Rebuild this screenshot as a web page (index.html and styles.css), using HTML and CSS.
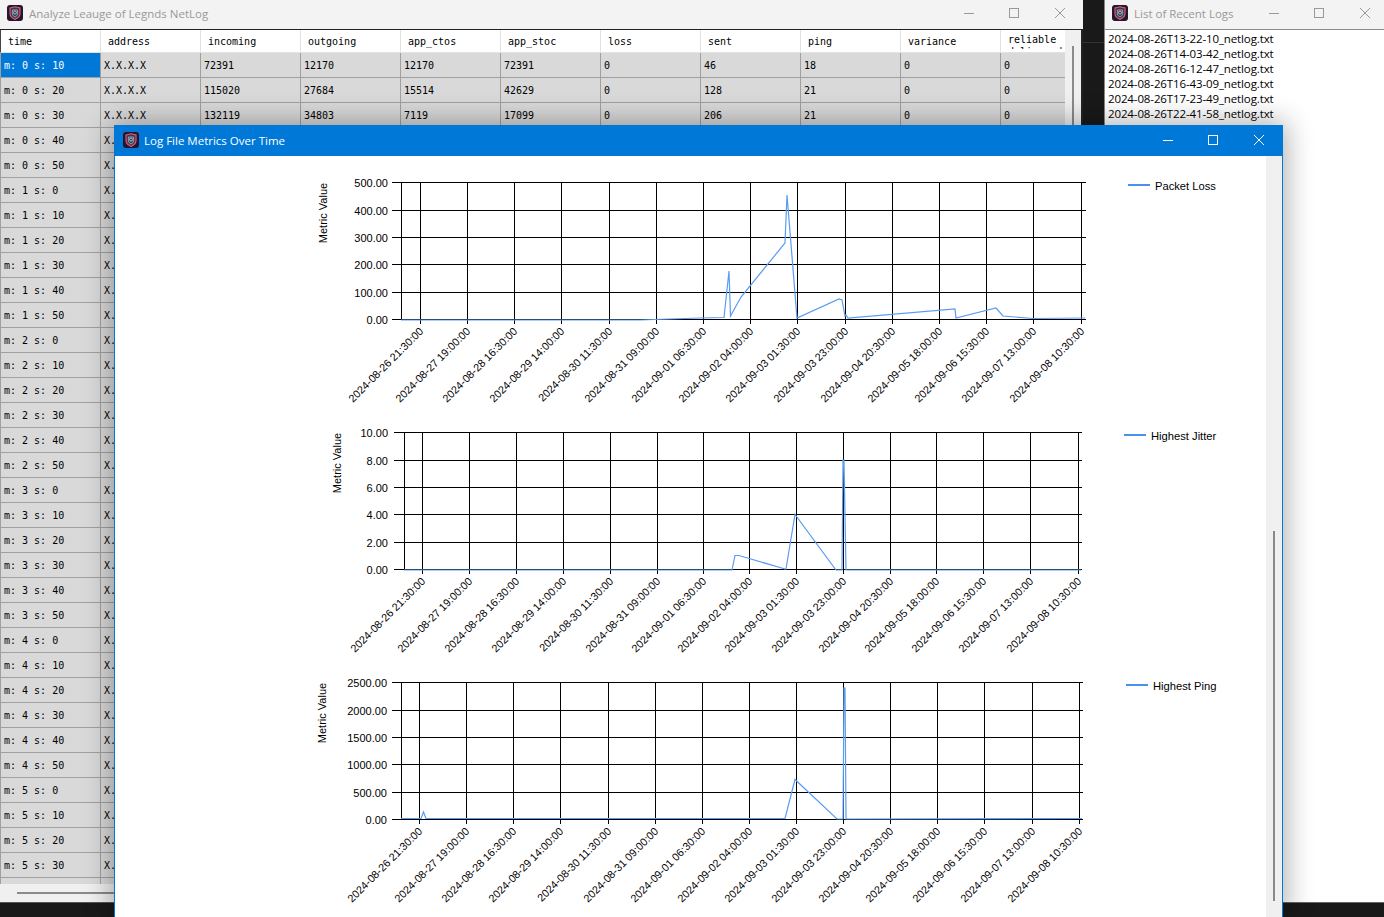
FILE: index.html
```html
<!DOCTYPE html>
<html lang="en">
<head>
    <meta charset="UTF-8">
    <meta name="viewport" content="width=device-width, initial-scale=1.0">
    <title>Analyze Leauge of Legnds NetLog</title>
    <link rel="stylesheet" href="styles.css">
</head>
<body>
    <svg class="defs" width="0" height="0" aria-hidden="true">
        <symbol id="app-icon" viewBox="0 0 16 16">
            <rect x="0" y="0" width="16" height="16" rx="3" fill="#221630"/>
            <path d="M3 3 L8 1.8 L13 3 V8.5 C13 11.5 10.5 13.3 8 14.4 C5.500 13.3 3 11.500 3 8.500 Z" fill="#5a2a48" stroke="#e0607a" stroke-width="1.100"/>
            <path d="M5.400 5 H10.600 V8.800 C10.600 10.400 9.300 11.300 8 12 C6.700 11.300 5.400 10.400 5.400 8.800 Z" fill="#33405a" stroke="#6fc2c0" stroke-width="0.900"/>
            <circle cx="8" cy="7.600" r="1.500" fill="none" stroke="#e8c8d0" stroke-width="0.800"/>
        </symbol>
        <symbol id="win-min" viewBox="0 0 10 10"><path d="M0 5.500 H10" fill="none" stroke="currentColor"/></symbol>
        <symbol id="win-max" viewBox="0 0 10 10"><rect x="0.500" y="0.500" width="9" height="9" fill="none" stroke="currentColor"/></symbol>
        <symbol id="win-close" viewBox="0 0 10 10"><path d="M0 0 L10 10 M10 0 L0 10" fill="none" stroke="currentColor"/></symbol>
    </svg>

    <div class="desktop">
        <div class="desktop-line"></div>

        <!-- main window with the table -->
        <section class="window main-window">
            <header class="titlebar">
                <svg class="app-icon"><use href="#app-icon"/></svg>
                <span class="title">Analyze Leauge of Legnds NetLog</span>
                <div class="controls">
                    <svg class="ctl"><use href="#win-min"/></svg>
                    <svg class="ctl"><use href="#win-max"/></svg>
                    <svg class="ctl ctl-close"><use href="#win-close"/></svg>
                </div>
            </header>
            <div class="table-area">
                <div class="table-clip">
                    <table class="log-table">
                        <thead id="logHead"></thead>
                        <tbody id="logBody"></tbody>
                    </table>
                </div>
                <div class="vscroll"><div class="vthumb"></div></div>
            </div>
            <div class="hscroll"><div class="hthumb"></div></div>
        </section>

        <!-- list of logs -->
        <section class="window list-window">
            <header class="titlebar">
                <svg class="app-icon"><use href="#app-icon"/></svg>
                <span class="title">List of Recent Logs</span>
                <div class="controls">
                    <svg class="ctl"><use href="#win-min"/></svg>
                    <svg class="ctl"><use href="#win-max"/></svg>
                    <svg class="ctl ctl-close"><use href="#win-close"/></svg>
                </div>
            </header>
            <ul class="log-list">
                <li>2024-08-26T13-22-10_netlog.txt</li>
                <li>2024-08-26T14-03-42_netlog.txt</li>
                <li>2024-08-26T16-12-47_netlog.txt</li>
                <li>2024-08-26T16-43-09_netlog.txt</li>
                <li>2024-08-26T17-23-49_netlog.txt</li>
                <li>2024-08-26T22-41-58_netlog.txt</li>
                <li>2024-08-26T23-12-42_netlog.txt</li>
            </ul>
        </section>

        <!-- plot window on top -->
        <section class="window plot-window">
            <header class="titlebar">
                <svg class="app-icon"><use href="#app-icon"/></svg>
                <span class="title">Log File Metrics Over Time</span>
                <div class="controls">
                    <svg class="ctl"><use href="#win-min"/></svg>
                    <svg class="ctl"><use href="#win-max"/></svg>
                    <svg class="ctl ctl-close"><use href="#win-close"/></svg>
                </div>
            </header>
            <div class="plot-body">
                <div class="plot-charts" id="charts"></div>
                <div class="plot-scroll"><div class="plot-thumb"></div></div>
            </div>
        </section>
    </div>

    <script src="script.js"></script>
</body>
</html>
```

FILE: styles.css
```css
* {
    box-sizing: border-box;
}

body {
    margin: 0;
    background-color: #191919;
    font-family: "Open Sans", "Liberation Sans", sans-serif;
    overflow: hidden;
}

.defs {
    position: absolute;
}

.desktop {
    position: relative;
    width: 1384px;
    height: 917px;
    overflow: hidden;
}

.desktop-line {
    position: absolute;
    left: 1083px;
    top: 42px;
    width: 21px;
    height: 1px;
    background-color: #333;
}

.window {
    position: absolute;
    display: flex;
    flex-direction: column;
    background-color: #fff;
}

.main-window {
    left: 0;
    top: 0;
    width: 1083px;
    height: 903px;
    border-bottom: 1px solid #555;
}

.list-window {
    left: 1104px;
    top: 0;
    width: 280px;
    height: 903px;
    border-left: 1px solid #888;
    border-bottom: 1px solid #666;
}

.plot-window {
    left: 114px;
    top: 125px;
    width: 1169px;
    height: 792px;
    border: 1px solid #0078d7;
    border-bottom: none;
    box-shadow: 0 0 26px 3px rgba(0, 0, 0, 0.32);
}

/* title bars */
.titlebar {
    display: flex;
    align-items: center;
    flex: none;
    height: 29px;
    padding-left: 7px;
    padding-bottom: 3px;
    background-color: #f3f3f3;
    color: #999;
    font-size: 11.5px;
}

.plot-window .titlebar {
    height: 30px;
    padding-left: 8px;
    padding-bottom: 2px;
    background-color: #0078d7;
    color: #fff;
}

.app-icon {
    flex: none;
    width: 16px;
    height: 16px;
    margin-right: 6px;
}

.plot-window .app-icon {
    margin-right: 5px;
}

.title {
    white-space: nowrap;
}

.controls {
    display: flex;
    align-items: center;
    margin-left: auto;
    gap: 35px;
    padding-right: 14px;
    color: #999;
}

.main-window .controls {
    padding-right: 18px;
}

.plot-window .controls {
    padding-right: 18px;
    color: #fff;
}

.ctl {
    display: block;
    width: 10px;
    height: 10px;
}

.ctl-close {
    margin-left: 1px;
}

/* table */
.table-area {
    display: flex;
    flex: 1;
    min-height: 0;
    border-top: 1px solid #222;
}

.table-clip {
    width: 1065px;
    overflow: hidden;
}

.log-table {
    width: 1065px;
    table-layout: fixed;
    border-collapse: separate;
    border-spacing: 0;
    font-family: "DejaVu Sans Mono", "Liberation Mono", monospace;
    font-size: 10px;
    color: #000;
}

.log-table th {
    height: 23px;
    padding: 0 0 0 7px;
    background-color: #fff;
    border-right: 1px solid #e2e2e2;
    border-bottom: 1px solid #e2e2e2;
    font-weight: normal;
    text-align: left;
    overflow: hidden;
}

.log-table th:first-child {
    width: 101px;
    border-left: 1px solid #444;
}

.log-table th:last-child {
    width: 64px;
    border-right: none;
    vertical-align: top;
    padding-top: 4px;
}

.header-wrap {
    display: block;
    height: 15px;
    overflow: hidden;
    line-height: 12px;
}

.log-table td {
    height: 25px;
    padding: 0 0 0 3px;
    background-color: #d9d9d9;
    border-right: 1px solid #a0a0a0;
    border-bottom: 1px solid #a0a0a0;
    white-space: nowrap;
    overflow: hidden;
}

.log-table td:first-child {
    border-left: 1px solid #a0a0a0;
}

.log-table td:last-child {
    border-right: none;
}

.log-table td.selected {
    background-color: #0078d7;
    color: #fff;
}

/* scrollbars */
.vscroll {
    flex: 1;
    background-color: #f0f0f0;
    border-right: 2px solid #222;
    padding: 16px 7px 0 7px;
}

.vthumb {
    width: 2px;
    height: 840px;
    background-color: #8a8a8a;
}

.hscroll {
    flex: none;
    height: 18px;
    background-color: #f0f0f0;
    padding: 8px 0 0 17px;
}

.hthumb {
    width: 1000px;
    height: 2px;
    background-color: #8a8a8a;
}

/* recent logs */
.log-list {
    flex: 1;
    margin: 0;
    padding: 1px 0 0 3px;
    list-style: none;
    border-top: 1px solid #8a8a8a;
    font-size: 11.5px;
    line-height: 15px;
    color: #000;
    letter-spacing: -0.12px;
}

/* plots */
.plot-body {
    display: flex;
    flex: 1;
    min-height: 0;
}

.plot-charts {
    width: 1151px;
    padding-top: 14px;
    overflow: hidden;
    background-color: #fff;
}

.chart {
    display: block;
    width: 1151px;
    height: 250px;
    font-family: "Liberation Sans", Arial, sans-serif;
    font-size: 11px;
    fill: #000;
}

.tick-label {
    font-size: 10.8px;
}

.legend-label {
    font-size: 11.2px;
}

.grid-line {
    stroke: #000;
    stroke-width: 1;
    shape-rendering: crispEdges;
}

.series {
    fill: none;
    stroke: #5a9cf2;
    stroke-width: 1.2;
}

.legend-line {
    stroke: #4a90ee;
    stroke-width: 2;
    shape-rendering: crispEdges;
}

.plot-scroll {
    flex: 1;
    background-color: #f0f0f0;
    padding: 375px 0 0 7px;
}

.plot-thumb {
    width: 2px;
    height: 370px;
    background-color: #8a8a8a;
}
```

FILE: script.js
```js
const columns = ['time', 'address', 'incoming', 'outgoing', 'app_ctos', 'app_stoc', 'loss', 'sent', 'ping', 'variance', 'reliable delivered'];

const firstRows = [
    ['72391', '12170', '12170', '72391', '0', '46', '18', '0', '0'],
    ['115020', '27684', '15514', '42629', '0', '128', '21', '0', '0'],
    ['132119', '34803', '7119', '17099', '0', '206', '21', '0', '0']
];

function buildTable() {
    const head = document.getElementById('logHead');
    const headRow = document.createElement('tr');
    columns.forEach((name, i) => {
        const th = document.createElement('th');
        if (i === columns.length - 1) {
            const wrap = document.createElement('span');
            wrap.className = 'header-wrap';
            wrap.textContent = name;
            th.appendChild(wrap);
        } else {
            th.textContent = name;
        }
        headRow.appendChild(th);
    });
    head.appendChild(headRow);

    const body = document.getElementById('logBody');
    for (let n = 1; n <= 34; n++) {
        const total = n * 10;
        const tr = document.createElement('tr');
        const label = 'm: ' + Math.floor(total / 60) + ' s: ' + (total % 60);
        const extra = firstRows[n - 1] || ['', '', '', '', '', '', '', '', ''];
        [label, 'X.X.X.X'].concat(extra).forEach((text, i) => {
            const td = document.createElement('td');
            td.textContent = text;
            if (n === 1 && i === 0) td.className = 'selected';
            tr.appendChild(td);
        });
        body.appendChild(tr);
    }
}

const tickLabels = [
    '2024-08-26 21:30:00', '2024-08-27 19:00:00', '2024-08-28 16:30:00', '2024-08-29 14:00:00',
    '2024-08-30 11:30:00', '2024-08-31 09:00:00', '2024-09-01 06:30:00', '2024-09-02 04:00:00',
    '2024-09-03 01:30:00', '2024-09-03 23:00:00', '2024-09-04 20:30:00', '2024-09-05 18:00:00',
    '2024-09-06 15:30:00', '2024-09-07 13:00:00', '2024-09-08 10:30:00'
];

// all coordinates are page pixels, the viewBox of each chart shifts them in place
const charts = [
    {
        top: 170, axisX: 401, tickX: 391, right: 1085, labelX: 388,
        metricX: 327, metricY: 213,
        rows: [182, 210, 237, 264, 292, 319],
        cols: [420, 467, 514, 561, 609, 656, 703, 750, 797, 845, 892, 939, 986, 1033, 1081],
        values: ['500.00', '400.00', '300.00', '200.00', '100.00', '0.00'],
        legend: 'Packet Loss', legendX: 1128, legendY: 185,
        points: '401,320 640,320 700,318 724,317.500 729,271 730.500,316 741,297 785,243 787,195 797,318 839,299 842,300 845,316 846,315 848,318 955,309 956,318 996,308 1003,316 1033,318.500 1085,318'
    },
    {
        top: 420, axisX: 404, tickX: 393, right: 1081, labelX: 388,
        metricX: 341, metricY: 463,
        rows: [432, 460, 487, 514, 542, 569],
        cols: [422, 469, 516, 563, 610, 657, 703, 749, 796, 843, 890, 936, 983, 1030, 1078],
        values: ['10.00', '8.00', '6.00', '4.00', '2.00', '0.00'],
        legend: 'Highest Jitter', legendX: 1124, legendY: 435,
        points: '404,570 732,570 735,555.500 739,555.500 785,569 786,569 795,514.500 836,570 842,570 843,460 844,460 846,570 1081,570'
    },
    {
        top: 670, axisX: 401, tickX: 391, right: 1082, labelX: 387,
        metricX: 326, metricY: 713,
        rows: [682, 710, 737, 764, 792, 819],
        cols: [419, 466, 513, 560, 608, 655, 702, 749, 796, 843, 890, 937, 984, 1032, 1079],
        values: ['2500.00', '2000.00', '1500.00', '1000.00', '500.00', '0.00'],
        legend: 'Highest Ping', legendX: 1126, legendY: 685,
        points: '401,818.500 421,818.500 423.500,812 426,818.500 785,818.500 795,779.500 837,819 843,819 844,688 845,688 846,819 1082,818.500'
    }
];

function line(x1, y1, x2, y2, cls) {
    return `<line class="${cls}" x1="${x1 + 0.5}" y1="${y1 + 0.5}" x2="${x2 + 0.5}" y2="${y2 + 0.5}"/>`;
}

function drawChart(c) {
    let s = `<svg class="chart" viewBox="115 ${c.top} 1151 250">`;
    const topY = c.rows[0];
    const botY = c.rows[c.rows.length - 1];

    s += line(c.axisX, topY, c.axisX, botY, 'grid-line');
    c.rows.forEach((y, i) => {
        s += line(c.tickX, y, c.right, y, 'grid-line');
        s += `<text x="${c.labelX}" y="${y + 4.5}" text-anchor="end">${c.values[i]}</text>`;
    });
    c.cols.forEach((x, i) => {
        s += line(x, topY, x, botY + 4, 'grid-line');
        s += `<text class="tick-label" text-anchor="end" transform="translate(${x + 4} ${botY + 13}) rotate(-45)">${tickLabels[i]}</text>`;
    });
    s += `<polyline class="series" points="${c.points}"/>`;
    s += `<text text-anchor="middle" transform="translate(${c.metricX} ${c.metricY}) rotate(-90)">Metric Value</text>`;
    s += `<line class="legend-line" x1="${c.legendX}" y1="${c.legendY}" x2="${c.legendX + 22}" y2="${c.legendY}"/>`;
    s += `<text class="legend-label" x="${c.legendX + 27}" y="${c.legendY + 5}">${c.legend}</text>`;
    return s + '</svg>';
}

buildTable();
document.getElementById('charts').innerHTML = charts.map(drawChart).join('');
```
